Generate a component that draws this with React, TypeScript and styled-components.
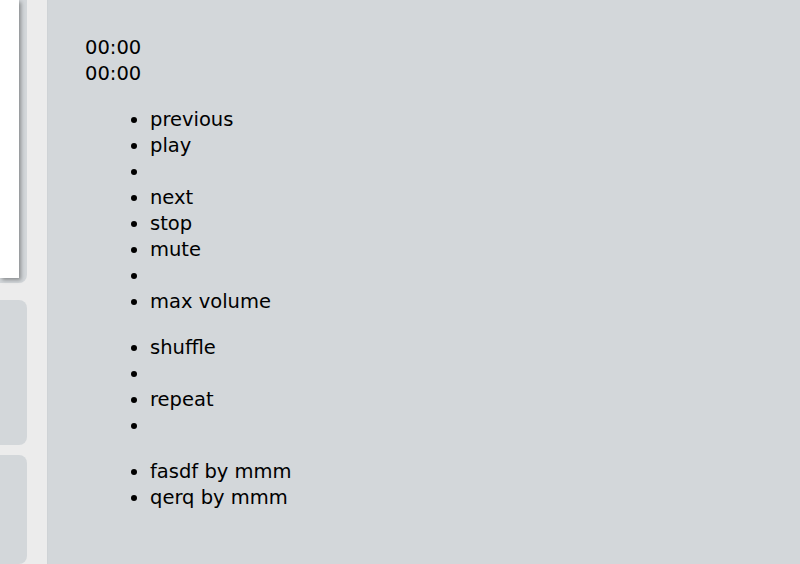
import React from "react";
import styled, { createGlobalStyle } from "styled-components";

const Global = createGlobalStyle`
  html, body { margin: 0; padding: 0; background: #ececec; }
  body { font-family: "DejaVu Sans", Verdana, sans-serif; }
`;

const Page = styled.div`
  display: flex;
  gap: 20px;
  height: 564px;
  overflow: hidden;
`;

const Sidebar = styled.aside`
  width: 27px;
  display: flex;
  flex-direction: column;
  flex-shrink: 0;
`;

const Panel = styled.div<{ $h?: number; $mb?: number; $grow?: boolean }>`
  background: #d3d7da;
  border-radius: 0 8px 8px 0;
  height: ${(p) => (p.$h ? `${p.$h}px` : "auto")};
  margin-bottom: ${(p) => p.$mb ?? 0}px;
  flex: ${(p) => (p.$grow ? "1" : "none")};
  flex-shrink: 0;
`;

const TopPanel = styled(Panel)`
  border-radius: 0 0 8px 0;
  padding-right: 8px;
  box-sizing: border-box;
`;

const WhiteBox = styled.div`
  width: 19px;
  height: 278px;
  background: #ffffff;
  box-shadow: 2px 2px 4px rgba(0, 0, 0, 0.35);
`;

const Main = styled.main`
  flex: 1;
  background: #d3d7da;
  border-left: 1px solid #cfd3d6;
  padding: 35px 0 0 37px;
  font-size: 19.5px;
  line-height: 26px;
  color: #000;
`;

const Time = styled.div``;

const List = styled.ul`
  margin: 20px 0;
  padding-left: 65px;
  list-style: disc;
`;

const Item = styled.li``;

const controls = ["previous", "play", "", "next", "stop", "mute", "", "max volume"];
const modes = ["shuffle", "", "repeat", ""];
const playlist = ["fasdf by mmm", "qerq by mmm"];

export default function App() {
  return (
    <>
      <Global />
      <Page>
        <Sidebar>
          <TopPanel $h={283} $mb={17}>
            <WhiteBox />
          </TopPanel>
          <Panel $h={145} $mb={10} />
          <Panel $grow />
        </Sidebar>
        <Main>
          <Time>00:00</Time>
          <Time>00:00</Time>
          <List>
            {controls.map((c, i) => (
              <Item key={i}>{c || "\u00a0"}</Item>
            ))}
          </List>
          <List>
            {modes.map((c, i) => (
              <Item key={i}>{c || "\u00a0"}</Item>
            ))}
          </List>
          <List>
            {playlist.map((c, i) => (
              <Item key={i}>{c}</Item>
            ))}
          </List>
        </Main>
      </Page>
    </>
  );
}
